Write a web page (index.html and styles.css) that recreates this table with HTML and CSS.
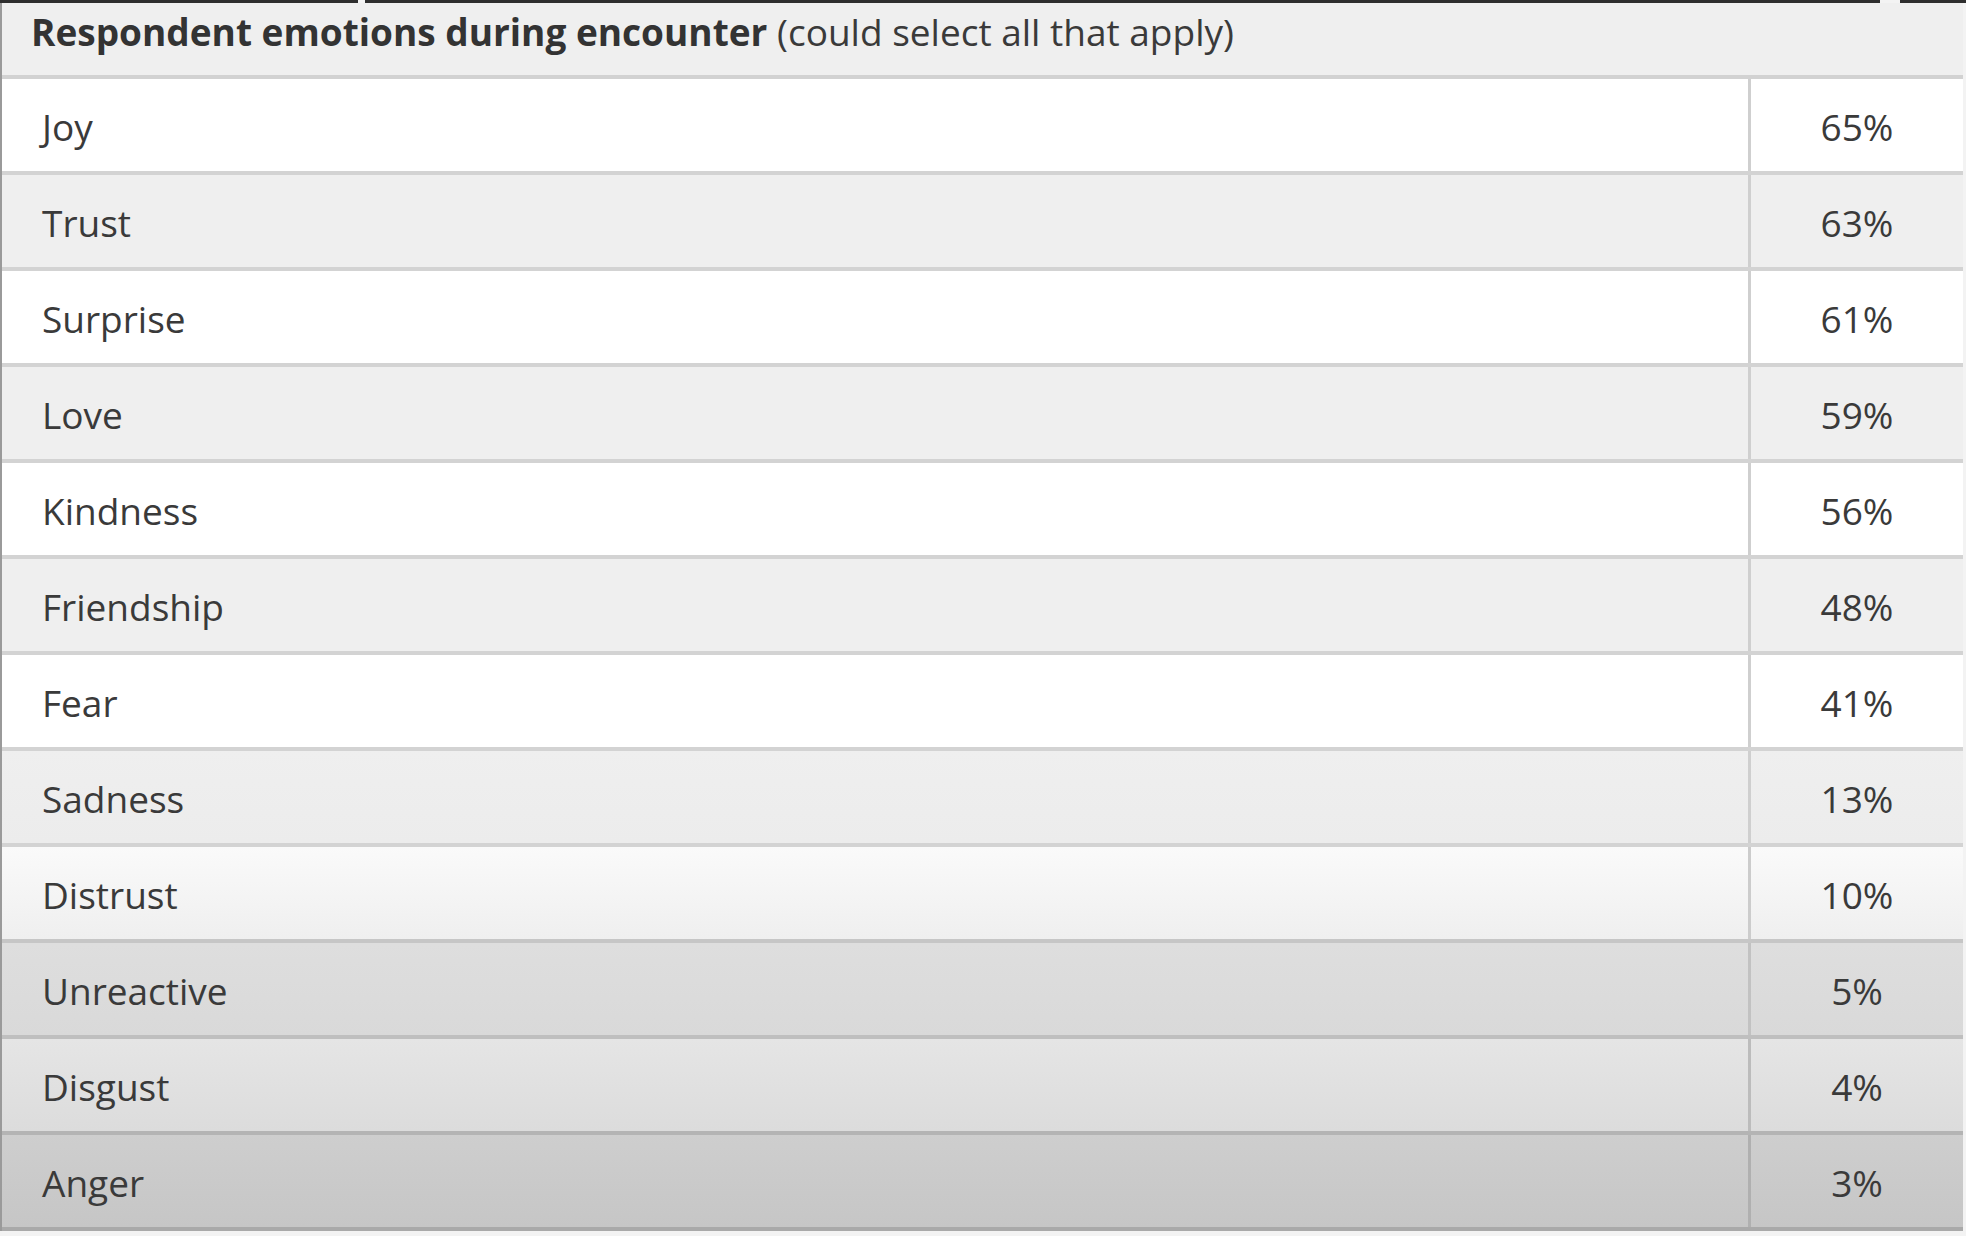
FILE: index.html
```html
<!DOCTYPE html>
<html lang="en">
<head>
<meta charset="utf-8">
<title>Respondent emotions during encounter</title>
<link rel="stylesheet" href="styles.css">
</head>
<body>
<div class="top-bar"></div>
<div class="table">
  <div class="caption"><strong>Respondent emotions during encounter</strong> (could select all that apply)</div>
  <div class="row r-white"><div class="label">Joy</div><div class="pct">65%</div></div>
  <div class="row r-grey"><div class="label">Trust</div><div class="pct">63%</div></div>
  <div class="row r-white"><div class="label">Surprise</div><div class="pct">61%</div></div>
  <div class="row r-grey"><div class="label">Love</div><div class="pct">59%</div></div>
  <div class="row r-white"><div class="label">Kindness</div><div class="pct">56%</div></div>
  <div class="row r-grey"><div class="label">Friendship</div><div class="pct">48%</div></div>
  <div class="row r-white"><div class="label">Fear</div><div class="pct">41%</div></div>
  <div class="row r-sadness"><div class="label">Sadness</div><div class="pct">13%</div></div>
  <div class="row r-distrust"><div class="label">Distrust</div><div class="pct">10%</div></div>
  <div class="row r-unreactive"><div class="label">Unreactive</div><div class="pct">5%</div></div>
  <div class="row r-disgust"><div class="label">Disgust</div><div class="pct">4%</div></div>
  <div class="row r-anger"><div class="label">Anger</div><div class="pct">3%</div></div>
</div>
</body>
</html>
```

FILE: styles.css
```css
html, body {
  margin: 0;
  padding: 0;
}
body {
  background: #f3f3f3;
  font-family: "Open Sans", "Liberation Sans", sans-serif;
  color: #3a3a3a;
  width: 1966px;
  height: 1236px;
  overflow: hidden;
}
.top-bar {
  height: 3px;
  background: linear-gradient(to right,
    #2e2e2e 0, #2e2e2e 358px, #f3f3f3 358px, #f3f3f3 365px,
    #2e2e2e 365px, #2e2e2e 1880px, #f3f3f3 1880px, #f3f3f3 1900px,
    #2e2e2e 1900px);
}
.table {
  width: 1961px;
  border-left: 2px solid #9a9a9a;
  display: flex;
  flex-direction: column;
}
.caption {
  height: 68px;
  padding: 4px 0 0 29px;
  background: #efefef;
  border-bottom: 4px solid #d2d2d2;
  font-size: 37px;
  line-height: 50px;
}
.caption strong {
  font-weight: 700;
  color: #333;
}
.row {
  display: flex;
  height: 92px;
  border-bottom: 4px solid #d3d3d3;
  font-size: 37px;
}
.label {
  flex: 1;
  display: flex;
  align-items: center;
  padding-left: 40px;
  padding-top: 2px;
}
.pct {
  width: 212px;
  border-left: 3px solid #cfcfcf;
  display: flex;
  align-items: center;
  justify-content: center;
  padding-top: 2px;
}
.r-white { background: #ffffff; }
.r-grey { background: #efefef; }
.r-sadness { background: linear-gradient(#efefef, #ececec); }
.r-distrust {
  background: linear-gradient(#fafafa, #efefef);
  border-bottom-color: #c6c6c6;
}
.r-distrust .pct { border-left-color: #cccccc; }
.r-unreactive {
  background: linear-gradient(#dedede, #d9d9d9);
  border-bottom-color: #bfbfbf;
}
.r-unreactive .pct { border-left-color: #c2c2c2; }
.r-disgust {
  background: linear-gradient(#e5e5e5, #dcdcdc);
  border-bottom-color: #b4b4b4;
}
.r-disgust .pct { border-left-color: #bcbcbc; }
.r-anger {
  background: linear-gradient(#cecece, #c6c6c6);
  border-bottom-color: #a9a9a9;
}
.r-anger .pct { border-left-color: #b0b0b0; }
```
